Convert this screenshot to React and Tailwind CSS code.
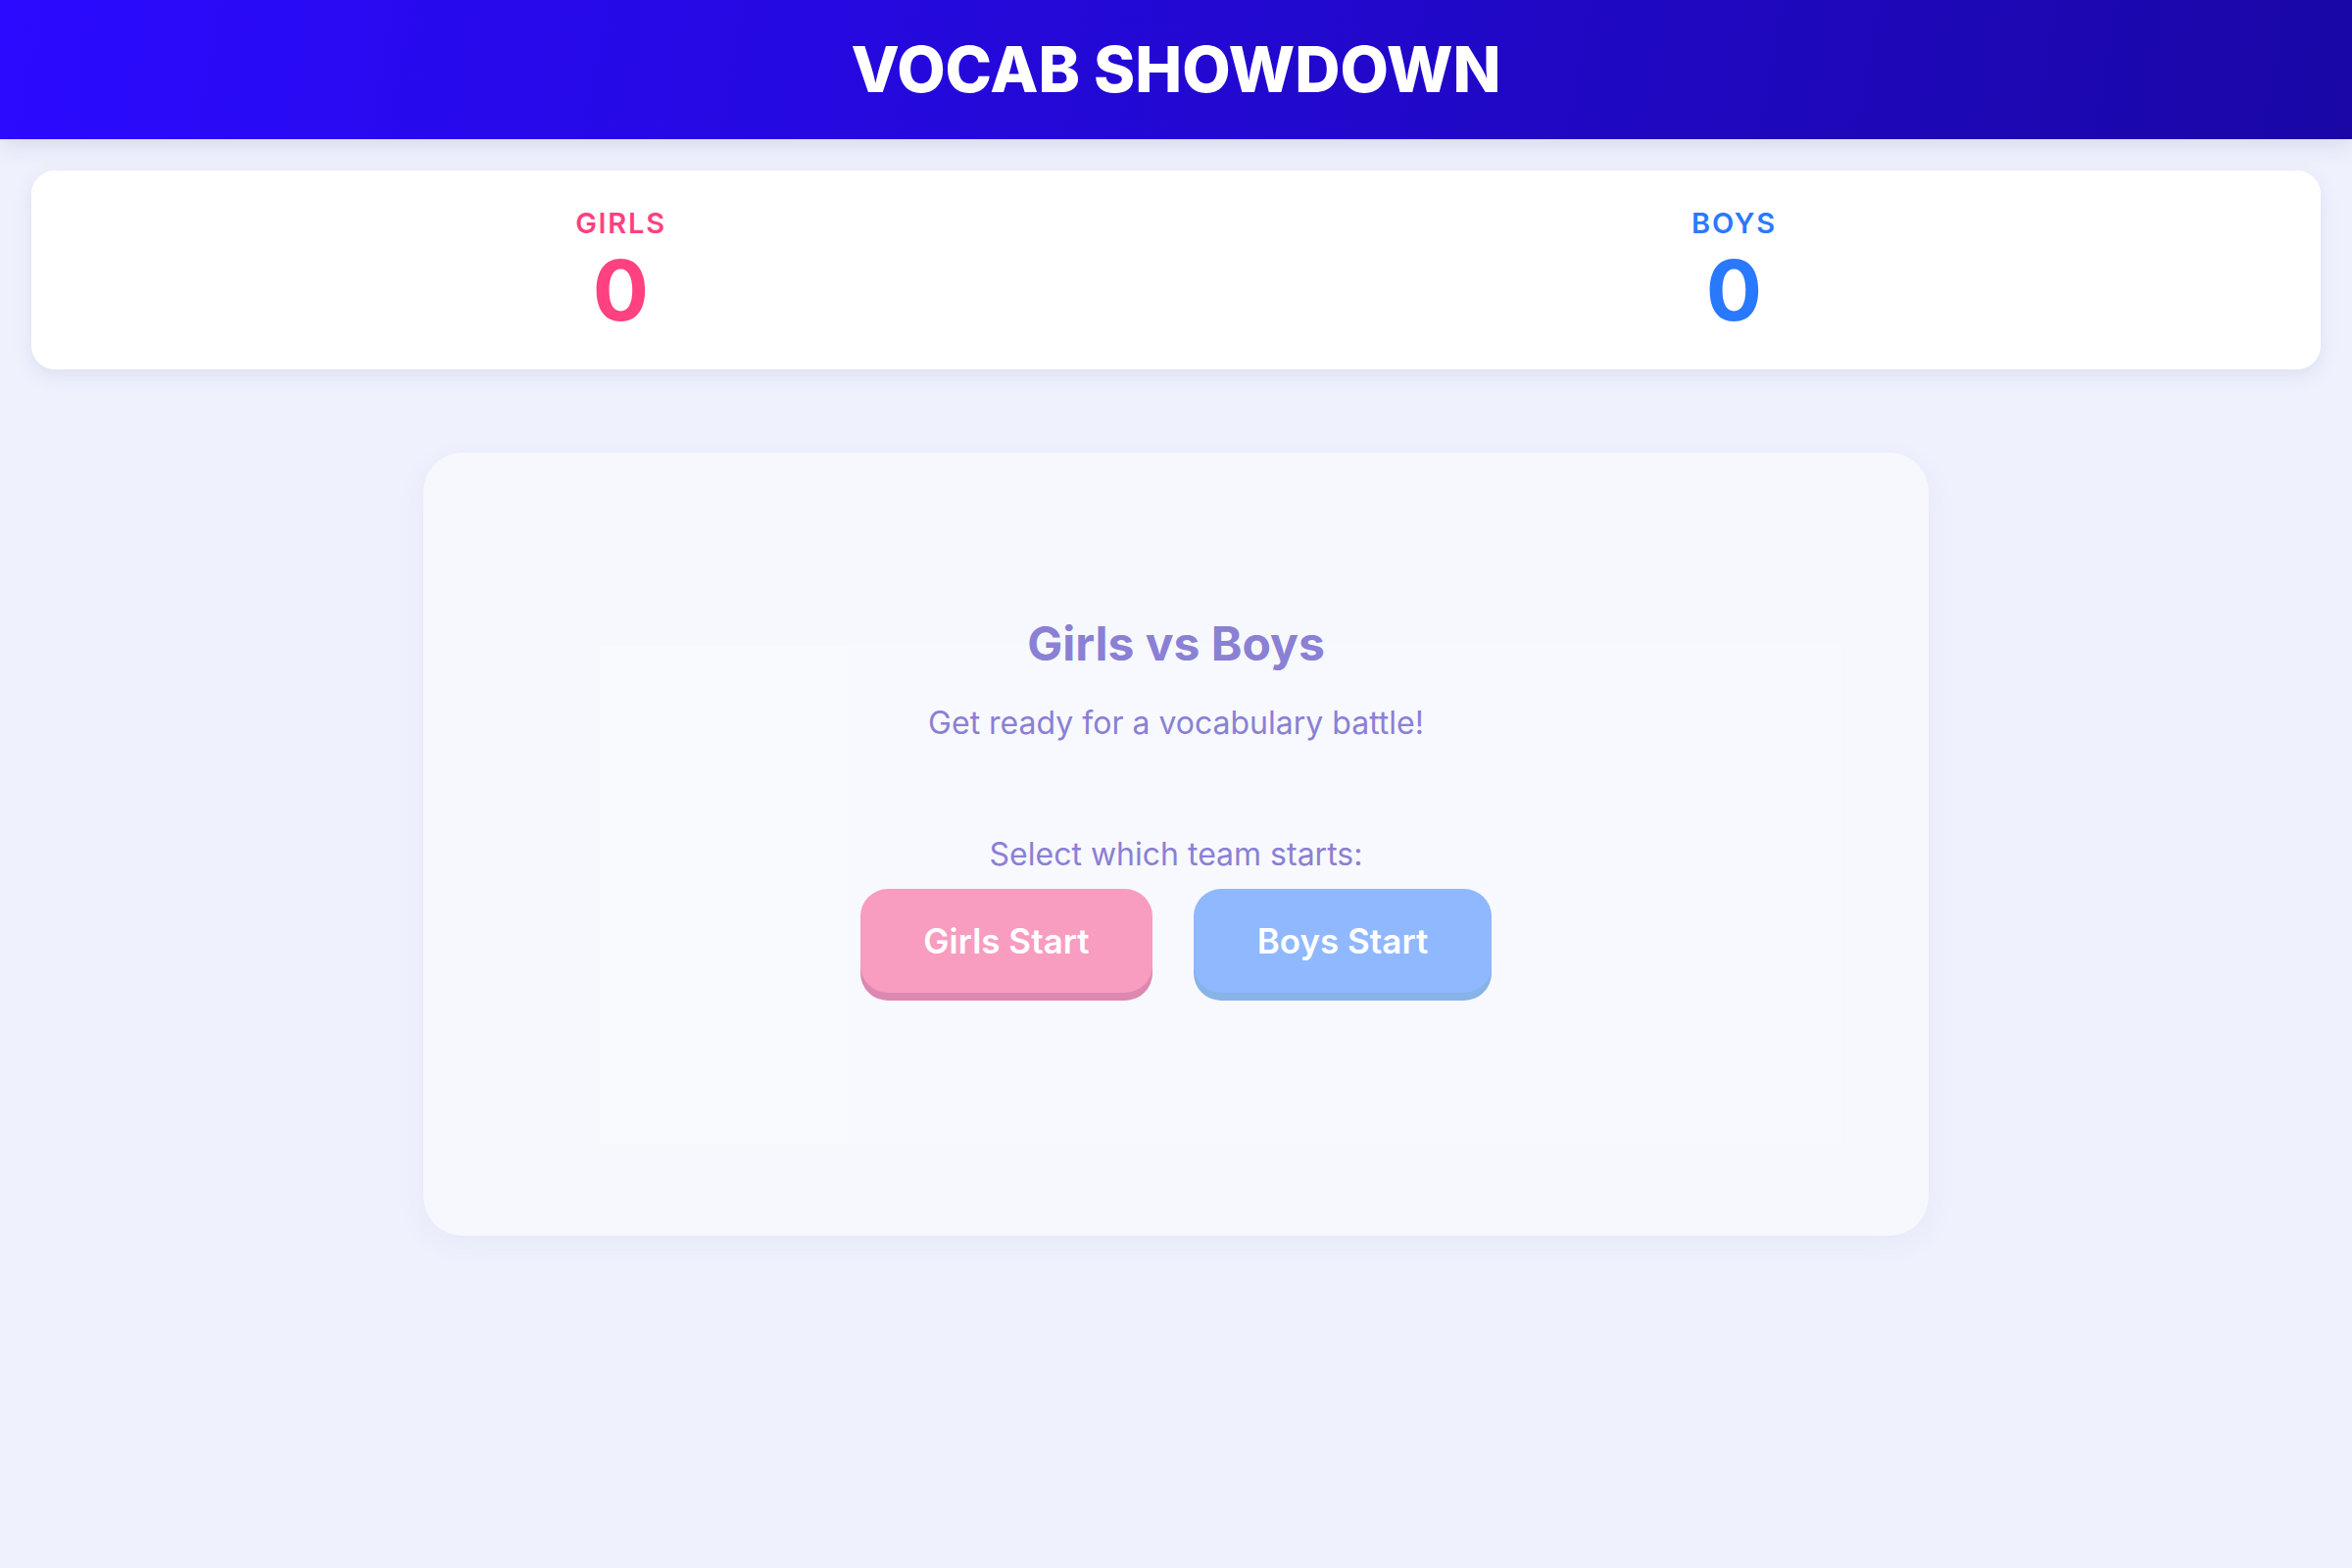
import { useState } from "react";

export default function App() {
  const [scores] = useState({ girls: 0, boys: 0 });
  const [startingTeam, setStartingTeam] = useState(null);

  return (
    <div className="min-h-screen bg-[#eff2fd] font-['Inter','Noto_Sans',sans-serif]">
      {/* Header */}
      <header className="h-[142px] flex items-center justify-center bg-[linear-gradient(100deg,#2b0aff,#1a07a6)] shadow-[0_6px_24px_rgba(30,30,90,0.12)]">
        <h1 className="text-white text-[64px] font-extrabold leading-none">
          VOCAB SHOWDOWN
        </h1>
      </header>

      <main className="px-8 pt-8">
        {/* Scoreboard */}
        <div className="bg-white rounded-3xl shadow-[0_6px_20px_rgba(60,70,140,0.10)] px-8 pt-8 pb-[38px] flex justify-around">
          <div className="flex flex-col items-center">
            <span className="text-[29px] leading-[1.5] font-semibold tracking-[0.06em] text-[#ff4081]">
              GIRLS
            </span>
            <span className="text-[85px] leading-none font-bold text-[#ff4081] mt-[4px]">
              {scores.girls}
            </span>
          </div>
          <div className="flex flex-col items-center">
            <span className="text-[29px] leading-[1.5] font-semibold tracking-[0.06em] text-[#2979ff]">
              BOYS
            </span>
            <span className="text-[85px] leading-none font-bold text-[#2979ff] mt-[4px]">
              {scores.boys}
            </span>
          </div>
        </div>

        {/* Game card */}
        <div className="relative mx-auto mt-[85px] w-[1536px] h-[799px] rounded-[40px] bg-[#f7f8fe] shadow-[0_8px_30px_rgba(60,70,140,0.06)] pt-[166px]">
          {/* faint inner panel */}
          <div className="absolute left-[180px] top-[196px] w-[1268px] h-[509px] bg-white/15">
            <div className="w-[253px] h-full bg-white/15" />
          </div>

          <div className="relative flex flex-col items-center">
            <h2 className="text-[48px] leading-[1.2] font-bold text-[#8a80d4]">
              Girls vs Boys
            </h2>
            <p className="mt-[29px] text-[32px] leading-[1.5] text-[#8a80d4]">
              Get ready for a vocabulary battle!
            </p>
            <p className="mt-[86px] text-[32px] leading-[1.5] text-[#8a80d4]">
              Select which team starts:
            </p>
            <div className="mt-[11px] flex gap-[42px]">
              <button
                onClick={() => setStartingTeam("girls")}
                className="h-[106px] w-[298px] rounded-[28px] bg-[#f89cc0] shadow-[0_8px_0_#dc88b0] text-white text-[35px] font-semibold flex items-center justify-center"
              >
                Girls Start
              </button>
              <button
                onClick={() => setStartingTeam("boys")}
                className="h-[106px] w-[304px] rounded-[28px] bg-[#90b8fe] shadow-[0_8px_0_#87b3e7] text-white text-[35px] font-semibold flex items-center justify-center"
              >
                Boys Start
              </button>
            </div>
            {startingTeam && <span className="hidden">{startingTeam}</span>}
          </div>
        </div>
      </main>
    </div>
  );
}
